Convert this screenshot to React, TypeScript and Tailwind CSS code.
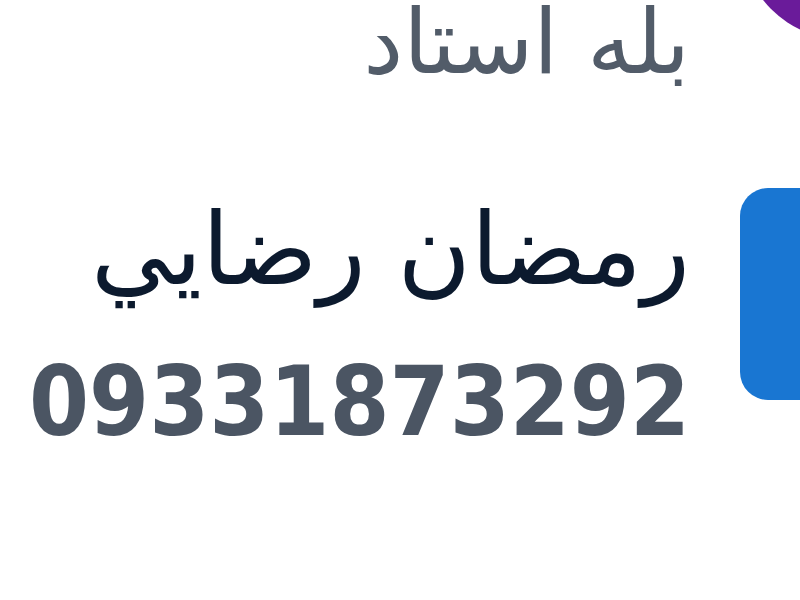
const arabic = { fontFamily: '"DejaVu Sans", "Noto Sans", sans-serif' };
const digits = { fontFamily: '"DejaVu Sans Condensed", "DejaVu Sans", sans-serif' };

const App = () => {
  return (
    <div dir="rtl" className="w-[800px] h-[600px] overflow-hidden bg-white">
      <div className="flex flex-col mr-[-152px]">
        <div className="flex gap-[50px] h-[188px]">
          <div className="w-[212px] h-[212px] shrink-0 rounded-full bg-[#6a1b9a] mt-[-172px]" />
          <p style={arabic} className="text-[90px] leading-[0.8] text-[#525c69] mt-[6px]">
            بله استاد
          </p>
        </div>
        <div className="flex gap-[50px]">
          <div className="w-[212px] h-[212px] shrink-0 rounded-[28px] bg-[#1976d2]" />
          <div className="flex flex-col pt-[12px]">
            <p style={arabic} className="text-[100px] leading-none text-[#0c1a2e]">
              رمضان رضايي
            </p>
            <p style={digits} dir="ltr" className="mt-[54px] text-[96px] leading-none font-bold text-[#4b5563] text-right">
              09331873292
            </p>
          </div>
        </div>
      </div>
    </div>
  );
};

export default App;
